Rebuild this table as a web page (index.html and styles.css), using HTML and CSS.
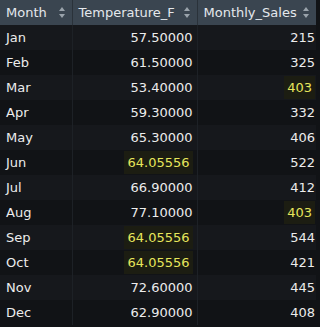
FILE: index.html
```html
<!DOCTYPE html>
<html>
<head>
<meta charset="utf-8">
<link rel="stylesheet" href="styles.css">
</head>
<body>
<table class="grid">
  <thead>
    <tr>
      <th class="c1"><span>Month</span><i class="sort"></i></th>
      <th class="c2"><span>Temperature_F</span><i class="sort"></i></th>
      <th class="c3"><span>Monthly_Sales</span><i class="sort"></i></th>
    </tr>
  </thead>
  <tbody>
    <tr><td>Jan</td><td class="num">57.50000</td><td class="num">215</td></tr>
    <tr><td>Feb</td><td class="num">61.50000</td><td class="num">325</td></tr>
    <tr><td>Mar</td><td class="num">53.40000</td><td class="num"><span class="hl">403</span></td></tr>
    <tr><td>Apr</td><td class="num">59.30000</td><td class="num">332</td></tr>
    <tr><td>May</td><td class="num">65.30000</td><td class="num">406</td></tr>
    <tr><td>Jun</td><td class="num"><span class="hl">64.05556</span></td><td class="num">522</td></tr>
    <tr><td>Jul</td><td class="num">66.90000</td><td class="num">412</td></tr>
    <tr><td>Aug</td><td class="num">77.10000</td><td class="num"><span class="hl">403</span></td></tr>
    <tr><td>Sep</td><td class="num"><span class="hl">64.05556</span></td><td class="num">544</td></tr>
    <tr><td>Oct</td><td class="num"><span class="hl">64.05556</span></td><td class="num">421</td></tr>
    <tr><td>Nov</td><td class="num">72.60000</td><td class="num">445</td></tr>
    <tr><td>Dec</td><td class="num">62.90000</td><td class="num">408</td></tr>
  </tbody>
</table>
</body>
</html>
```
FILE: styles.css
```css
html, body {
  margin: 0;
  padding: 0;
  background: #111316;
}
.grid {
  border-collapse: collapse;
  table-layout: fixed;
  width: 316px;
  font-family: "DejaVu Sans", sans-serif;
  font-size: 13px;
  color: #ececec;
}
.c1 { width: 72px; }
.c2 { width: 125px; }
.c3 { width: 119px; }
th {
  position: relative;
  height: 25px;
  padding: 0 16px 0 6px;
  background: #3a4550;
  color: #e4e8ec;
  font-weight: normal;
  text-align: left;
  border-right: 1px solid #2a323a;
  box-sizing: border-box;
  white-space: nowrap;
  overflow: hidden;
}
th:last-child { border-right: none; }
.sort {
  position: absolute;
  right: 6px;
  top: 7px;
  width: 7px;
  height: 11px;
}
.sort::before, .sort::after {
  content: "";
  position: absolute;
  left: 0;
  border-left: 3.5px solid transparent;
  border-right: 3.5px solid transparent;
}
.sort::before {
  top: 0;
  border-bottom: 4px solid #9aa3ab;
}
.sort::after {
  bottom: 0;
  border-top: 4px solid #9aa3ab;
}
td {
  height: 25px;
  padding: 0 6px;
  box-sizing: border-box;
  border-right: 1px solid #1d2126;
  white-space: nowrap;
}
td:last-child { border-right: none; }
tbody tr:nth-child(odd) td { background: #16181c; }
tbody tr:nth-child(even) td { background: #111316; }
td.num { text-align: right; padding-right: 4px; }
td:last-child.num { padding-right: 1px; }
.hl {
  display: inline-block;
  padding: 0 3px;
  line-height: 23px;
  color: #e6e65c;
  background: #1c1d12;
}
```
